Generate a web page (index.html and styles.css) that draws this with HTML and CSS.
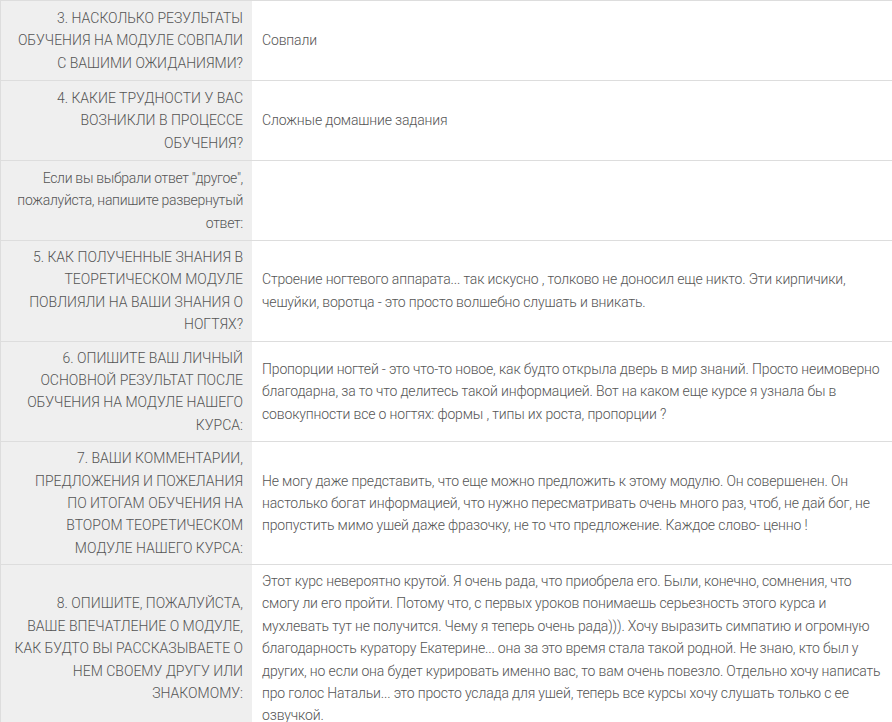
FILE: index.html
```html
<!DOCTYPE html>
<html lang="ru">
<head>
    <meta charset="UTF-8">
    <meta name="viewport" content="width=device-width, initial-scale=1.0">
    <title>Анкета по модулю</title>
    <link rel="stylesheet" href="styles.css">
</head>
<body>

    <table class="answers">
        <tr>
            <th>3. Насколько результаты обучения на модуле совпали с вашими ожиданиями?</th>
            <td>Совпали</td>
        </tr>
        <tr>
            <th>4. Какие трудности у вас возникли в процессе обучения?</th>
            <td>Сложные домашние задания</td>
        </tr>
        <tr>
            <th class="note">Если вы выбрали ответ "другое", пожалуйста, напишите развернутый ответ:</th>
            <td></td>
        </tr>
        <tr>
            <th>5. Как полученные знания в теоретическом модуле повлияли на ваши знания о ногтях?</th>
            <td>Строение ногтевого аппарата... так искусно , толково не доносил еще никто. Эти кирпичики, чешуйки, воротца - это просто волшебно слушать и вникать.</td>
        </tr>
        <tr>
            <th>6. Опишите ваш личный основной результат после обучения на модуле нашего курса:</th>
            <td>Пропорции ногтей - это что-то новое, как будто открыла дверь в мир знаний. Просто неимоверно благодарна, за то что делитесь такой информацией. Вот на каком еще курсе я узнала бы в совокупности все о ногтях: формы , типы их роста, пропорции ?</td>
        </tr>
        <tr>
            <th>7. Ваши комментарии, предложения и пожелания по&nbsp;итогам обучения на втором теоретическом модуле нашего курса:</th>
            <td>Не могу даже представить, что еще можно предложить к этому модулю. Он совершенен. Он настолько богат информацией, что нужно пересматривать очень много раз, чтоб, не дай бог, не пропустить мимо ушей даже фразочку, не то что предложение. Каждое слово- ценно !</td>
        </tr>
        <tr>
            <th>8. Опишите, пожалуйста, ваше&nbsp;впечатление о модуле, как будто вы рассказываете о нем своему другу или знакомому:</th>
            <td>Этот курс невероятно крутой. Я очень рада, что приобрела его. Были, конечно, сомнения, что смогу ли его пройти. Потому что, с первых уроков понимаешь серьезность этого курса и мухлевать тут не получится. Чему я теперь очень рада))). Хочу выразить симпатию и огромную благодарность куратору Екатерине... она за это время стала такой родной. Не знаю, кто был у других, но если она будет курировать именно вас, то вам очень повезло. Отдельно хочу написать про голос Натальи... это просто услада для ушей, теперь все курсы хочу слушать только с ее озвучкой.</td>
        </tr>
    </table>

</body>
</html>
```

FILE: styles.css
```css
body {
    margin: 0;
    padding: 0;
    font-family: Roboto, "Noto Sans", sans-serif;
    font-size: 14px;
    font-weight: 300;
    line-height: 1.6;
    letter-spacing: -0.15px;
    color: #555;
    background-color: #fff;
}
.answers {
    width: 100%;
    border-collapse: collapse;
    border-left: 1px solid #ddd;
}
.answers tr {
    border-top: 1px solid #ddd;
    height: 80px;
}
.answers th {
    width: 233px;
    padding: 5px 9px 5px 9px;
    background-color: #efefef;
    text-align: right;
    text-transform: uppercase;
    letter-spacing: 0;
    font-weight: 300;
    vertical-align: middle;
}
.answers th.note {
    text-transform: none;
    letter-spacing: -0.3px;
}
.answers td {
    padding: 5px 6px 5px 10px;
    text-align: left;
    vertical-align: middle;
}
```
